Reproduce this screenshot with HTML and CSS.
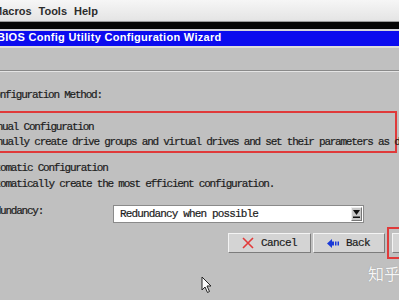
FILE: index.html
```html
<!DOCTYPE html>
<html lang="en">
<head>
  <meta charset="UTF-8">
  <title>BIOS Config Utility Configuration Wizard</title>
  <link rel="stylesheet" href="styles.css">
</head>
<body>
  <!-- Host menu bar -->
  <div class="menubar">
    <span class="menu menu-first">Macros</span>
    <span class="menu">Tools</span>
    <span class="menu">Help</span>
  </div>
  <div class="blackbar"></div>

  <div class="window">
    <div class="titlebar">BIOS Config Utility Configuration Wizard</div>

    <div class="panel">
      <div class="sep"></div>
      <p class="heading">Configuration Method:</p>

      <!-- Manual option (highlighted) -->
      <div class="option highlight">
        <p class="opt-line">Manual Configuration</p>
        <p class="opt-line">Manually create drive groups and virtual drives and set their parameters as desired.</p>
      </div>

      <!-- Automatic option -->
      <div class="option auto">
        <p class="opt-line">Automatic Configuration</p>
        <p class="opt-line">Automatically create the most efficient configuration.</p>
      </div>

      <div class="field-row">
        <label class="field-label">Redundancy:</label>
        <div class="select">
          <span class="select-value">Redundancy when possible</span>
          <span class="select-btn">
            <svg width="7" height="8" viewBox="0 0 7 8"><polygon points="0,0 7,0 3.5,5" fill="#111"/><rect x="0" y="6.5" width="7" height="1.5" fill="#111"/></svg>
          </span>
        </div>
      </div>

      <div class="buttons">
        <button class="btn btn-cancel">
          <svg width="12" height="12" viewBox="0 0 12 12"><path d="M1 1 L11 11 M11 1 L1 11" stroke="#e23a3a" stroke-width="1.6" fill="none"/></svg>
          <span>Cancel</span>
        </button>
        <button class="btn btn-back">
          <svg width="12" height="9" viewBox="0 0 12 9"><polygon points="0,4.5 5,0 5,9" fill="#1a3ad8"/><rect x="5" y="2.5" width="2" height="4" fill="#1a3ad8"/><rect x="8" y="2.5" width="1.5" height="4" fill="#1a3ad8"/><rect x="10.5" y="2.5" width="1.5" height="4" fill="#1a3ad8"/></svg>
          <span>Back</span>
        </button>
        <div class="next-box">
          <button class="btn btn-next"><span>Next</span></button>
        </div>
      </div>
    </div>
  </div>

  <div class="watermark">知乎</div>
  <svg class="cursor" width="12" height="18" viewBox="0 0 12 18"><path d="M1 1 L1 14 L4 11 L6.5 16.5 L8.5 15.5 L6 10 L10 10 Z" fill="#fafafa" stroke="#222" stroke-width="1"/></svg>
</body>
</html>
```

FILE: styles.css
```css
body {
  margin: 0;
  width: 399px;
  height: 300px;
  overflow: hidden;
  position: relative;
  background-color: #c0c0c0;
  font-family: "Liberation Mono", "Courier New", monospace;
  white-space: nowrap;
}

p {
  margin: 0;
}

/* Host menu bar */
.menubar {
  height: 21px;
  display: flex;
  align-items: center;
  gap: 7px;
  background: linear-gradient(#f6f6f6, #e4e4e4);
  border-bottom: 1px solid #9a9a9a;
  font: bold 11px "Liberation Sans", Arial, sans-serif;
  color: #2c2c2c;
}

.menu-first {
  margin-left: -7px;
}

.blackbar {
  height: 7px;
  background-color: #060606;
}

/* Wizard window */
.window {
  border-top: 2px solid #d4d4dc;
}

.titlebar {
  height: 15px;
  line-height: 15px;
  background-color: #0b0bef;
  color: #fff;
  font: bold 11px "Liberation Sans", Arial, sans-serif;
  letter-spacing: 0.3px;
  text-indent: -3px;
  border-bottom: 2px solid #dcdcdc;
}

.panel {
  padding-top: 22px;
  font-size: 11px;
  letter-spacing: -1.23px;
  color: #1c1c1c;
  -webkit-text-stroke: 0.2px #1c1c1c;
}

.sep {
  border-top: 1px solid #8a8a8a;
  border-bottom: 1px solid #e4e4e4;
}

.heading {
  margin-top: 15px;
  line-height: 16px;
  text-indent: -11px;
}

.option .opt-line {
  text-indent: -16px;
}

.highlight {
  margin: 8px 2px 0 -4px;
  padding: 7px 0 1px 4px;
  border: 2px solid #e03a3a;
  line-height: 15px;
}

.auto {
  margin-top: 7px;
  line-height: 16px;
}

/* Redundancy dropdown */
.field-row {
  margin-top: 13px;
  display: flex;
  align-items: flex-start;
}

.field-label {
  width: 113px;
  line-height: 12px;
  text-indent: -16px;
  overflow: hidden;
}

.select {
  width: 249px;
  height: 16px;
  display: flex;
  align-items: center;
  background-color: #fff;
  border: 1px solid #8a8a8a;
}

.select-value {
  flex: 1;
  padding-left: 6px;
  letter-spacing: -0.85px;
}

.select-btn {
  width: 11px;
  height: 14px;
  margin-right: 1px;
  display: flex;
  align-items: center;
  justify-content: center;
  background-color: #c8c8c8;
  border: 1px solid;
  border-color: #eee #777 #777 #eee;
  box-sizing: border-box;
}

/* Wizard buttons */
.buttons {
  margin-top: 4px;
  display: flex;
  align-items: center;
  gap: 2px;
  padding-left: 228px;
}

.btn {
  height: 20px;
  display: flex;
  align-items: center;
  gap: 7px;
  padding: 0 0 0 13px;
  background-color: #d4d4d4;
  border: 1px solid;
  border-color: #f4f4f4 #7c7c7c #7c7c7c #f4f4f4;
  box-sizing: border-box;
  font: inherit;
  letter-spacing: -0.6px;
  color: inherit;
  flex-shrink: 0;
}

.btn-cancel {
  width: 83px;
}

.btn-back {
  width: 72px;
}

.next-box {
  padding: 4px 3px;
  border: 2px solid #e03a3a;
  flex-shrink: 0;
}

.btn-next {
  width: 72px;
  padding-left: 28px;
}

.watermark {
  position: absolute;
  top: 261px;
  left: 368px;
  font: 16px "Noto Sans CJK SC", sans-serif;
  color: #f6f6f6;
  text-shadow: 0 0 1px #8c8c8c;
}

.cursor {
  position: absolute;
  left: 201px;
  top: 276px;
}
```
